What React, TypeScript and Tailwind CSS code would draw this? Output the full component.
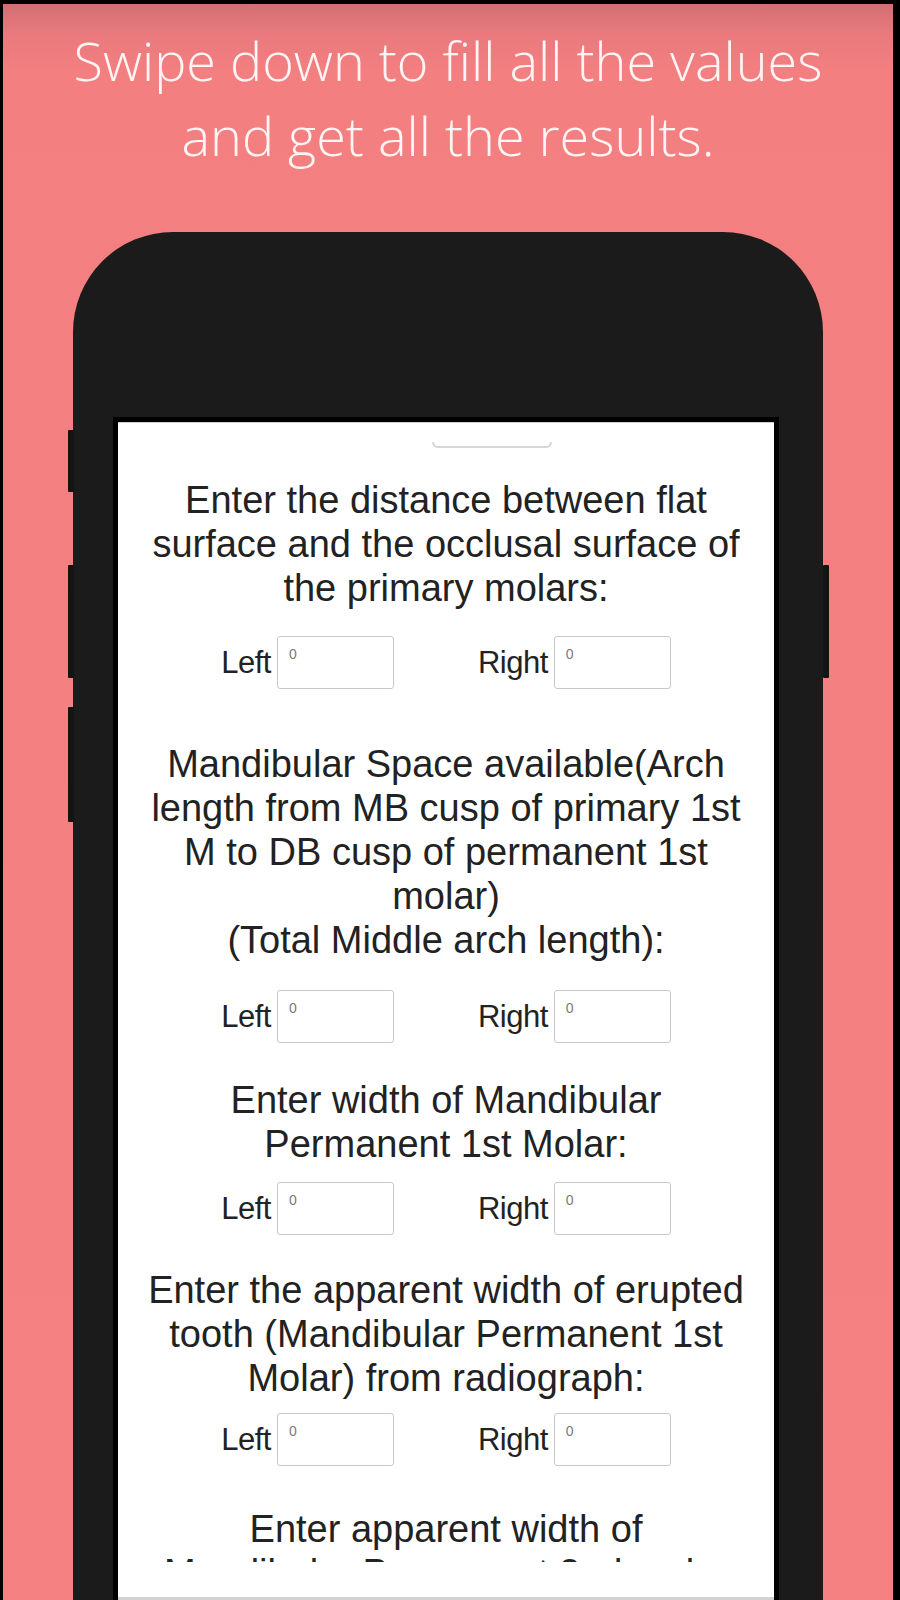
import { ReactNode } from "react";

interface Question {
  id: string;
  text: ReactNode;
  textTop: string;
  rowTop: string;
}

const questions: Question[] = [
  {
    id: "flat-surface",
    text: "Enter the distance between flat surface and the occlusal surface of the primary molars:",
    textTop: "mt-[30px]",
    rowTop: "mt-[26px]",
  },
  {
    id: "space-available",
    text: (
      <>
        Mandibular Space available(Arch length from MB cusp of primary 1st M to DB cusp of permanent 1st molar)
        <br />
        (Total Middle arch length):
      </>
    ),
    textTop: "mt-[53px]",
    rowTop: "mt-[28px]",
  },
  {
    id: "molar-width",
    text: "Enter width of Mandibular Permanent 1st Molar:",
    textTop: "mt-[35px]",
    rowTop: "mt-[16px]",
  },
  {
    id: "erupted-width",
    text: "Enter the apparent width of erupted tooth (Mandibular Permanent 1st Molar) from radiograph:",
    textTop: "mt-[33px]",
    rowTop: "mt-[13px]",
  },
];

function ValueInput({ label }: { label: string }) {
  return (
    <label className="flex items-center gap-[6px]">
      <span className="text-[31px] leading-none tracking-[-0.5px] text-[#222]">{label}</span>
      <input
        type="text"
        placeholder="0"
        className="h-[53px] w-[117px] rounded-[3px] border border-[#c9c9c9] bg-white px-[11px] pt-[8px] pb-[25px] text-[14px] text-[#333] outline-none placeholder:text-[#7a7a7a]"
      />
    </label>
  );
}

function LeftRightRow({ top }: { top: string }) {
  return (
    <div className={`${top} flex items-center justify-center gap-[84px]`}>
      <ValueInput label="Left" />
      <ValueInput label="Right" />
    </div>
  );
}

function SideButton({ className }: { className: string }) {
  return <div className={`absolute w-[6px] rounded-[1px] bg-[#141414] ${className}`} />;
}

export default function App() {
  return (
    <div className="h-[1600px] w-[900px] overflow-hidden bg-black pt-[4px] pr-[7px] pl-[3px]">
      <div className="h-full bg-[linear-gradient(180deg,#d26f74_0px,#e97a7d_30px,#f47f81_70px,#f58182_100%)]">
        <h1 className="pt-[19px] text-center font-['Open_Sans',sans-serif] text-[54px] leading-[75px] font-light text-[#fff5f4]">
          Swipe down to fill all the values
          <br />
          and get all the results.
        </h1>

        {/* phone body */}
        <div className="relative mt-[59px] ml-[70px] h-[1368px] w-[750px] rounded-t-[100px] bg-[#1b1b1b] pt-[185px] pl-[40px]">
          <SideButton className="-left-[5px] top-[198px] h-[62px]" />
          <SideButton className="-left-[5px] top-[333px] h-[113px]" />
          <SideButton className="-left-[5px] top-[475px] h-[115px]" />
          <SideButton className="-right-[6px] top-[333px] h-[113px]" />

          <div className="h-[1200px] w-[666px] border-[5px] border-black bg-white">
            <div className="border-t border-[#cfcfcf] font-['Liberation_Sans',Arial,sans-serif] text-[#222]">
              <div className="h-[1139px] overflow-hidden">
                <div className="mt-[19px] ml-[314px] h-[6px] w-[120px] rounded-b-[6px] border-x-2 border-b-2 border-[#d6d6d6]" />

                <div className="px-[23px] text-center">
                  {questions.map((q) => (
                    <section key={q.id}>
                      <p className={`${q.textTop} text-[38px] leading-[44px]`}>{q.text}</p>
                      <LeftRightRow top={q.rowTop} />
                    </section>
                  ))}
                  <p className="mt-[41px] text-[38px] leading-[44px]">
                    Enter apparent width of
                    <br />
                    Mandibular Permanent 2nd molar from radiograph:
                  </p>
                </div>
              </div>
              <div className="mt-[35px] border-t-[3px] border-[#d2d2d2]" />
            </div>
          </div>
        </div>
      </div>
    </div>
  );
}
